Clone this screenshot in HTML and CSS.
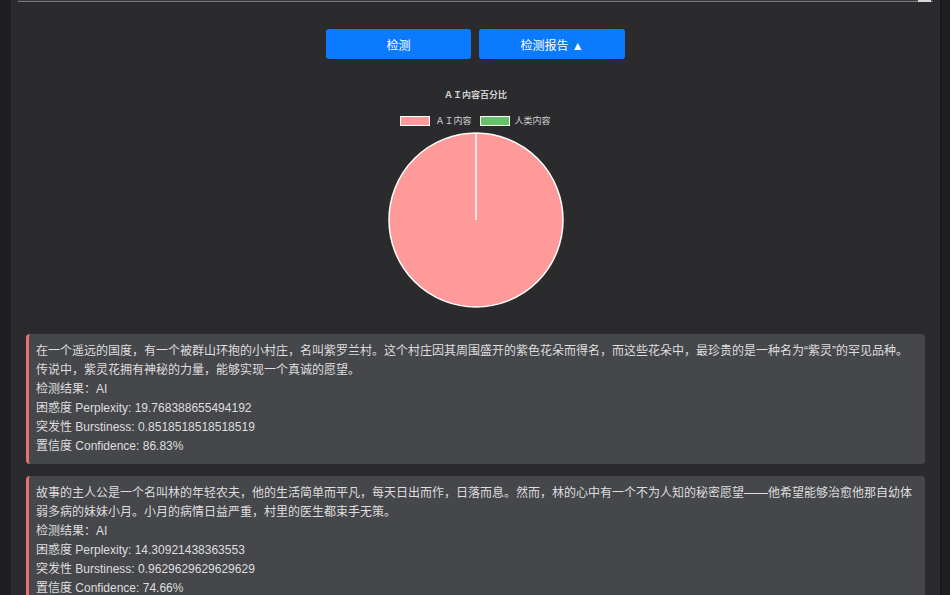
FILE: index.html
```html
<!DOCTYPE html>
<html lang="zh-CN">
<head>
<meta charset="utf-8">
<title>AI 内容检测</title>
<link rel="stylesheet" href="styles.css">
</head>
<body>
<div class="page">
  <div class="input-tail"><span class="grip"></span></div>
  <div class="actions">
    <button class="btn btn-detect">检测</button>
    <button class="btn">检测报告 ▲</button>
  </div>
  <div class="chart">
    <div class="chart-title">ＡＩ内容百分比</div>
    <div class="legend">
      <span class="legend-item"><span class="swatch swatch-ai"></span>ＡＩ内容</span>
      <span class="legend-item"><span class="swatch swatch-human"></span>人类内容</span>
    </div>
    <svg class="pie" width="180" height="180" viewBox="0 0 180 180">
      <circle cx="90" cy="90" r="87" fill="#ff9a9a" stroke="#ffffff" stroke-width="1.5"/>
      <line x1="90" y1="90" x2="90" y2="3" stroke="#ffffff" stroke-width="1.5"/>
    </svg>
  </div>
  <div class="results">
    <div class="card">
      <p>在一个遥远的国度，有一个被群山环抱的小村庄，名叫紫罗兰村。这个村庄因其周围盛开的紫色花朵而得名，而这些花朵中，最珍贵的是一种名为“紫灵”的罕见品种。传说中，紫灵花拥有神秘的力量，能够实现一个真诚的愿望。</p>
      <p>检测结果：AI</p>
      <p>困惑度 Perplexity: 19.768388655494192</p>
      <p>突发性 Burstiness: 0.8518518518518519</p>
      <p>置信度 Confidence: 86.83%</p>
    </div>
    <div class="card">
      <p>故事的主人公是一个名叫林的年轻农夫，他的生活简单而平凡，每天日出而作，日落而息。然而，林的心中有一个不为人知的秘密愿望——他希望能够治愈他那自幼体弱多病的妹妹小月。小月的病情日益严重，村里的医生都束手无策。</p>
      <p>检测结果：AI</p>
      <p>困惑度 Perplexity: 14.30921438363553</p>
      <p>突发性 Burstiness: 0.9629629629629629</p>
      <p>置信度 Confidence: 74.66%</p>
    </div>
  </div>
</div>
</body>
</html>
```

FILE: styles.css
```css
html, body {
  margin: 0;
  padding: 0;
  height: 100%;
  overflow: hidden;
}

body {
  background: #1f1f21;
  font-family: "Liberation Sans", "Noto Sans CJK SC", sans-serif;
  color: #dcdcdc;
}

.page {
  margin: 0 8px 0 11px;
  padding: 0 15px 20px;
  min-height: 100%;
  background: #2b2b2d;
  border-right: 2px solid #18181a;
}

.input-tail {
  position: relative;
  margin: 0 -8px;
  height: 1px;
  background: #3a3a3d;
  border-bottom: 1px solid #7a7a7e;
}

.grip {
  position: absolute;
  right: 2px;
  top: 0;
  width: 13px;
  height: 2px;
  background: #d8d8d8;
}

.actions {
  display: flex;
  justify-content: center;
  gap: 8px;
  margin-top: 27px;
}

.btn {
  width: 146px;
  height: 30px;
  border: none;
  border-radius: 3px;
  background: #0a7bff;
  color: #ffffff;
  font-family: "Liberation Sans", "Noto Sans CJK SC", sans-serif;
  font-size: 12px;
  padding: 0;
}

.btn-detect {
  width: 145px;
}

.chart {
  display: flex;
  flex-direction: column;
  align-items: center;
  margin-top: 30px;
}

.chart-title {
  font-size: 9px;
  line-height: 12px;
  font-weight: bold;
  color: #cfcfcf;
}

.legend {
  display: flex;
  gap: 8px;
  margin-top: 14px;
  font-size: 9px;
  line-height: 12px;
  color: #cfcfcf;
}

.legend-item {
  display: flex;
  align-items: center;
  gap: 5px;
}

.swatch {
  display: block;
  width: 28px;
  height: 8px;
  border: 1px solid #ffffff;
}

.swatch-ai {
  background: #ff9a9a;
}

.swatch-human {
  background: #66c266;
}

.pie {
  display: block;
  margin-top: 3px;
}

.results {
  display: flex;
  flex-direction: column;
  gap: 12px;
  margin-top: 24px;
}

.card {
  background: #46474b;
  border-left: 3px solid #e57373;
  border-radius: 4px;
  padding: 8px 11px 8px 7px;
  font-size: 12px;
  line-height: 19px;
  color: #dedede;
}

.card p {
  margin: 0;
}
```
